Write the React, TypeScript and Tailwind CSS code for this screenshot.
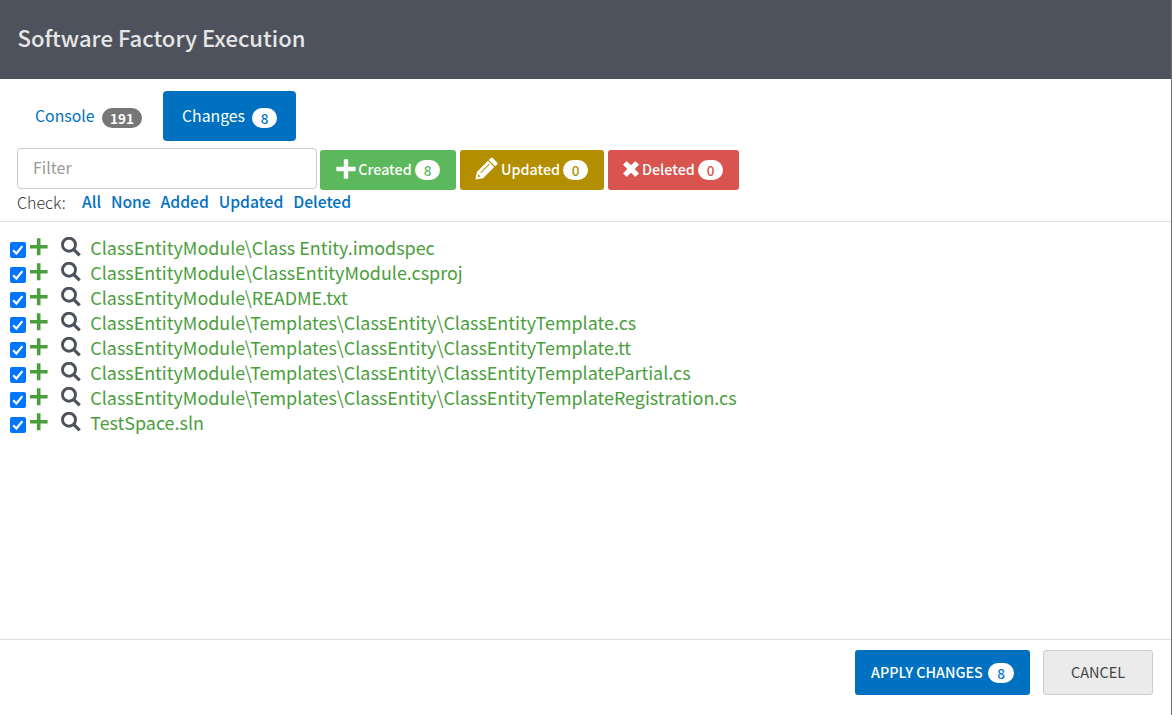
import React from "react";

const files = [
  "ClassEntityModule\\Class Entity.imodspec",
  "ClassEntityModule\\ClassEntityModule.csproj",
  "ClassEntityModule\\README.txt",
  "ClassEntityModule\\Templates\\ClassEntity\\ClassEntityTemplate.cs",
  "ClassEntityModule\\Templates\\ClassEntity\\ClassEntityTemplate.tt",
  "ClassEntityModule\\Templates\\ClassEntity\\ClassEntityTemplatePartial.cs",
  "ClassEntityModule\\Templates\\ClassEntity\\ClassEntityTemplateRegistration.cs",
  "TestSpace.sln",
];

function Plus({ className }: { className: string }) {
  return (
    <svg viewBox="0 0 20 20" className={className} fill="currentColor">
      <path d="M8.6 0.300h2.800q.8 0 .8.8v6.700h6.700q.8 0 .8.8v2.800q0 .8-.8.8h-6.700v6.700q0 .8-.8.8H8.600q-.8 0-.8-.8v-6.700H1.100q-.8 0-.8-.8V8.600q0-.8.8-.8h6.700V1.100q0-.8.8-.8z" />
    </svg>
  );
}

function ThinPlus() {
  return (
    <svg viewBox="0 0 18 18" className="block h-[18px] w-[18px]" fill="none" stroke="#4a9e3c" strokeWidth="3.600">
      <path d="M8.700 .3v17M0 8.800h17.600" />
    </svg>
  );
}

function Search() {
  return (
    <svg viewBox="0 0 20 20" className="block h-5 w-5" fill="none" stroke="#4e525d">
      <circle cx="8" cy="7.700" r="6.500" strokeWidth="2.900" />
      <path d="M12.600 12.300L18.700 18.300" strokeWidth="3.200" />
    </svg>
  );
}

function Pencil() {
  return (
    <svg viewBox="0 0 23 23" className="block h-[23px] w-[23px]" fill="currentColor">
      <path d="M15.600 1.100q1-1 2.100 0l4.400 4.300q1 1 0 2l-1.900 1.900-6.400-6.400z" />
      <path fillRule="evenodd" d="M13 3.800l6.300 6.300L8 21.200.4 22.500l1.500-7.500zM3.500 17.200l-.6 2.900 2.700-.6zM5.200 15.400l.8.7 8.700-8.700-.7-.7z" />
    </svg>
  );
}

function Cross() {
  return (
    <svg viewBox="0 0 16 16" className="block h-4 w-4" fill="currentColor">
      <path d="M.4 3.300L3.300.4q.4-.4.8 0L8 4.300 11.900.4q.4-.4.8 0l2.900 2.900q.4.4 0 .8L11.700 8l3.900 3.900q.4.4 0 .8l-2.900 2.900q-.4.4-.8 0L8 11.700l-3.900 3.900q-.4.4-.8 0L.4 12.700q-.4-.4 0-.8L4.300 8 .4 4.100q-.4-.4 0-.8z" />
    </svg>
  );
}

function Badge({ className, children }: { className: string; children: React.ReactNode }) {
  return (
    <span className={`flex h-5 shrink-0 items-center justify-center rounded-[10px] leading-5 ${className}`}>
      {children}
    </span>
  );
}

export default function App() {
  return (
    <div className="flex h-[715px] w-[1172px] overflow-hidden bg-white font-['Noto_Sans_CJK_SC','Noto_Sans',sans-serif] whitespace-nowrap">
      <div className="flex w-[1171px] flex-col">
        <header className="flex h-[79px] shrink-0 items-center bg-[#4e525d] pb-[5px] pl-[17.500px] text-[22.100px] leading-[30px] font-medium text-[#e6e6e6]">
          <h1>Software Factory Execution</h1>
        </header>

        <nav className="flex h-[69px] shrink-0 pt-3 pl-4">
          <a className="flex h-[50px] w-[147px] items-center pl-[19px] text-[15.800px] text-[#0071c1]">
            <span className="w-[60px]">Console</span>
            <Badge className="mt-[3px] ml-[7px] w-10 bg-[#777777] text-[13.500px] font-bold text-white">191</Badge>
          </a>
          <a className="flex h-[50px] w-[133px] items-center rounded-[4px] bg-[#0071c1] pl-[19px] text-[15.800px] text-white">
            <span className="w-[63px]">Changes</span>
            <Badge className="mt-[3px] ml-[7px] w-[25px] bg-white text-[13.500px] font-medium text-[#0071c1]">8</Badge>
          </a>
        </nav>

        <div className="flex h-[42px] shrink-0 pl-[17px]">
          <input
            placeholder="Filter"
            className="h-[41px] w-[300px] rounded-[4px] border border-[#cccccc] px-[15px] pb-[3px] text-[16px] outline-none placeholder:text-[#999999]"
          />
          <button className="mt-[2px] ml-[3px] flex h-10 w-[136px] items-center rounded-[3px] bg-[#5cb85c] pl-4 text-[14.300px] font-medium text-white">
            <Plus className="mb-[2px] block h-5 w-5" />
            <span className="ml-[2px] w-[54px] pb-[3px]">Created</span>
            <Badge className="ml-[3px] w-[25px] bg-white text-[13.500px] text-[#5cb85c]">8</Badge>
          </button>
          <button className="mt-[2px] ml-1 flex h-10 w-36 items-center rounded-[3px] bg-[#b38f00] pl-[15px] text-[14.300px] font-medium text-white">
            <span className="mb-[3px]"><Pencil /></span>
            <span className="ml-[3px] w-[58px] pb-[3px]">Updated</span>
            <Badge className="ml-1 w-[25px] bg-white text-[13.500px] text-[#b38f00]">0</Badge>
          </button>
          <button className="mt-[2px] ml-1 flex h-10 w-[131px] items-center rounded-[3px] bg-[#d9534f] pl-[15px] text-[14.300px] font-medium text-white">
            <span className="mb-[3px]"><Cross /></span>
            <span className="ml-[3px] w-[52px] pb-[3px]">Deleted</span>
            <Badge className="ml-1 w-[25px] bg-white text-[13.500px] text-[#d9534f]">0</Badge>
          </button>
        </div>

        <div className="flex h-8 shrink-0 border-b border-[#dddddd] pl-[17px] text-[15.700px] leading-[22px] text-[#333333]">
          <span className="w-[65px] pt-px text-[16px] font-light">Check:</span>
          <div className="flex gap-[9.800px] pt-px font-medium text-[#0071c1]">
            <a>All</a>
            <a>None</a>
            <a>Added</a>
            <a>Updated</a>
            <a>Deleted</a>
          </div>
        </div>

        <ul className="flex-1 pt-[13px] pl-[10px]">
          {files.map((name) => (
            <li key={name} className="flex h-[25px] text-[17.920px] leading-[25px] text-[#4a9e3c]">
              <span className="mt-[7px] block h-4 w-4 rounded-[2px] bg-[#0075ff]">
                <svg viewBox="0 0 16 16" className="block h-4 w-4" fill="none" stroke="white" strokeWidth="2.200">
                  <path d="M3.200 8.300l3.200 3.200 6-7.400" />
                </svg>
              </span>
              <span className="mt-[3px] ml-1"><ThinPlus /></span>
              <span className="mt-[2px] ml-[13px]"><Search /></span>
              <span className="ml-[9.300px]">{name}</span>
            </li>
          ))}
        </ul>

        <footer className="flex h-[76px] shrink-0 border-t border-[#dddddd] pt-[10px] pl-[855px]">
          <button className="flex h-[45px] w-[175px] items-center rounded-[3px] bg-[#0071c1] pl-4 text-[14.300px] font-medium text-white">
            <span className="w-[114px] pb-[2px] text-left">APPLY CHANGES</span>
            <Badge className="ml-[3px] w-[26px] bg-white text-[13.500px] text-[#0071c1]">8</Badge>
          </button>
          <button className="ml-[13px] flex h-[45px] w-[110px] items-center justify-center rounded-[3px] border border-[#cccccc] bg-[#ebebeb] pb-[2px] text-[14.500px] text-[#444444]">
            CANCEL
          </button>
        </footer>
      </div>
      <div className="w-px bg-[#6f6f6f]" />
    </div>
  );
}
